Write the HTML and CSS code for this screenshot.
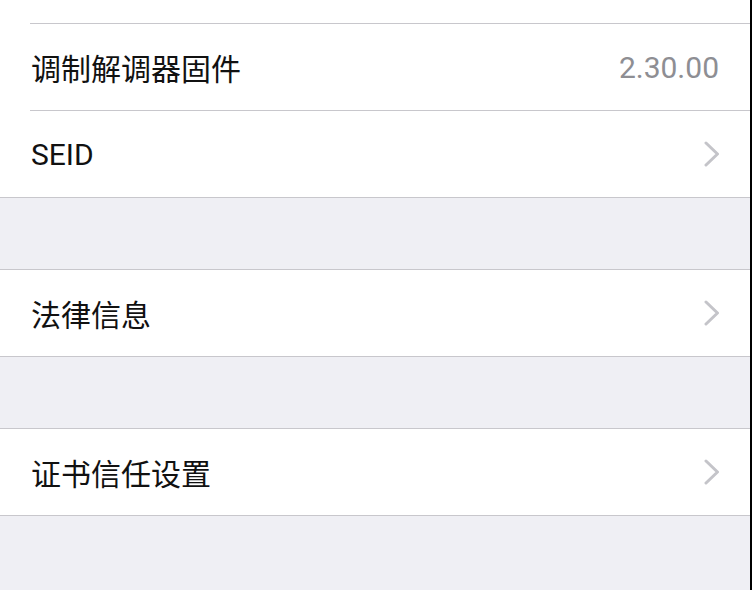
FILE: index.html
```html
<!DOCTYPE html>
<html lang="zh-CN">
<head>
    <meta charset="UTF-8">
    <meta name="viewport" content="width=device-width, initial-scale=1.0">
    <title>关于本机</title>
    <link rel="stylesheet" href="styles.css">
</head>
<body>
    <div class="screen">
        <div class="group group-top">
            <div class="row row-cut"></div>
            <div class="row">
                <div class="row-body">
                    <span class="label">调制解调器固件</span>
                    <span class="value">2.30.00</span>
                </div>
            </div>
            <div class="row">
                <div class="row-body">
                    <span class="label">SEID</span>
                    <svg class="chevron" viewBox="0 0 16 26" width="16" height="26">
                        <polyline points="2,2 13.5,13 2,24" fill="none" stroke="#c4c4c9" stroke-width="3" stroke-linecap="round" stroke-linejoin="round"/>
                    </svg>
                </div>
            </div>
        </div>

        <div class="gap"></div>

        <div class="group">
            <div class="row">
                <div class="row-body">
                    <span class="label">法律信息</span>
                    <svg class="chevron" viewBox="0 0 16 26" width="16" height="26">
                        <polyline points="2,2 13.5,13 2,24" fill="none" stroke="#c4c4c9" stroke-width="3" stroke-linecap="round" stroke-linejoin="round"/>
                    </svg>
                </div>
            </div>
        </div>

        <div class="gap"></div>

        <div class="group">
            <div class="row">
                <div class="row-body">
                    <span class="label">证书信任设置</span>
                    <svg class="chevron" viewBox="0 0 16 26" width="16" height="26">
                        <polyline points="2,2 13.5,13 2,24" fill="none" stroke="#c4c4c9" stroke-width="3" stroke-linecap="round" stroke-linejoin="round"/>
                    </svg>
                </div>
            </div>
        </div>
    </div>
</body>
</html>
```

FILE: styles.css
```css
body{
    margin: 0;
    padding: 0;
    background: #000;
}
.screen{
    min-height: 100vh;
    margin-right: 2px;
    background: #efeff4;
    font-family: Roboto, "Noto Sans CJK SC", sans-serif;
    color: #111;
}
.group{
    background: #fff;
    border-top: 1px solid #c8c7cc;
    border-bottom: 1px solid #c8c7cc;
}
.group-top{
    border-top: none;
}
.row{
    padding-left: 30px;
}
.row-cut{
    height: 23px;
}
.row-body{
    height: 86px;
    display: flex;
    align-items: center;
    justify-content: space-between;
    padding-right: 31px;
}
.row + .row .row-body{
    border-top: 1px solid #c8c7cc;
}
.label{
    font-size: 30px;
    padding-left: 1px;
}
.value{
    font-size: 30px;
    color: #8e8e93;
}
.chevron{
    display: block;
    margin-right: -1px;
}
.gap{
    height: 71px;
}
```
